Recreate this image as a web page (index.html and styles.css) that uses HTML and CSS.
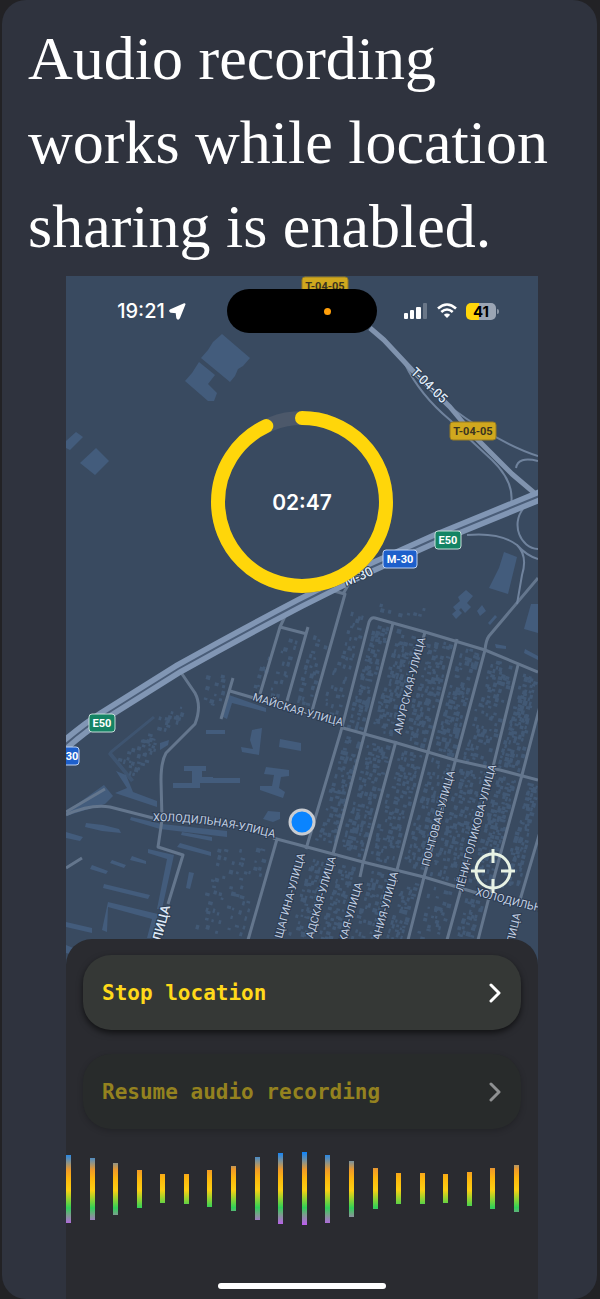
FILE: index.html
```
<!DOCTYPE html>
<html lang="en">
<head>
    <meta charset="UTF-8">
    <meta name="viewport" content="width=device-width, initial-scale=1.0">
    <title>Location sharing</title>
    <link rel="stylesheet" href="styles.css">
</head>
<body>
    <main class="card">
        <h1 class="headline">Audio recording<br>works while location<br>sharing is enabled.</h1>

        <div class="phone">
            <section class="map-area">
                <svg class="map" viewBox="66 276 472 690" role="img" aria-label="Map">
                    <defs>
                        <path id="p-t0405" d="M410 373L452 413"/>
                        <path id="p-m30" d="M346 586Q362 581 378 572"/>
                        <path id="p-may" d="M252 700Q300 716 350 728"/>
                        <path id="p-amur" d="M401 735L428 628"/>
                        <path id="p-holod" d="M153 821Q215 821 282 840"/>
                        <path id="p-holod2" d="M475 895Q510 905 550 914"/>
                        <path id="p-poch" d="M429 867L458 760"/>
                        <path id="p-leni" d="M463 892L499 755"/>
                        <path id="p-shag" d="M282 939L307 848"/>
                        <path id="p-adsk" d="M313 939L338 850"/>
                        <path id="p-kaya" d="M346 943L367 868"/>
                        <path id="p-aniya" d="M380 941L401 862"/>
                        <path id="p-litsa" d="M161 942L173 896"/>
                        <path id="p-litsa2" d="M514 944L523 904"/>
                    </defs>

                    <rect x="66" y="276" width="472" height="690" fill="#394a60"/>

                    <!-- large buildings -->
                    <g fill="#435c7c">
                        <path d="M222 334L250 358L243 366L238 369L235 376L230 382L201 358L208 350L213 342Z"/>
                        <path d="M199 362L215 375L208 384L217 393L214 401L208 401L185 381L192 373Z"/>
                        <path d="M66 441L76 432L83 437L70 450L66 448Z"/>
                        <path d="M96 448L109 461L95 475L80 463Z"/>
                        <path d="M504 552L517 557L508 594L489 588L499 568Z"/>
                        <path d="M466 590L473 596L467 603L471 607L465 613L461 608L457 612L453 607L460 601L458 597Z"/>
                        <path d="M458 609L462 613L456 619L452 614Z"/>
                        <path d="M538 604L531 604L524 629L538 633Z"/>
                        <path d="M477 611L482 605L486 611L480 616Z"/>
                        <path d="M488 623L495 615L497 617L490 625Z"/>
                        <path d="M206 730H225V734H206Z"/>
                        <path d="M280 739L301 743V751L279 747Z"/>
                        <path d="M252 730L262 728L259 755L242 752L241 747L253 749L250 740Z"/>
                        <path d="M229 695L266 708V712L232 703L227 719L221 716Z"/>
                        <path d="M184 766H206V771H202V777H213V783H200V788H173V783H192V771H184Z"/>
                        <path d="M213 778H240V783H213Z"/>
                        <path d="M266 767L289 770V776L281 777L279 788L285 792L283 798L260 790V786L272 786L274 775L264 774Z"/>
                        <path d="M116 771L126 775L133 792L157 801V807L115 793L127 788Z"/>
                        <path d="M66 812L104 785L113 796L105 804L66 816Z"/>
                        <path d="M86 823L103 825L119 829L121 833L102 831L85 827Z"/>
                        <path d="M66 832L83 837L80 841L66 838Z"/>
                        <path d="M132 856L146 861V864L130 860ZM112 860L126 865L124 868L110 863ZM92 865L108 871L106 874L90 869Z"/>
                        <path d="M104 884L150 895L148 899L103 888Z"/>
                        <path d="M131 817L162 824L227 831V837L160 829L130 820Z"/>
                        <path d="M182 832L212 837V841L181 835ZM180 843L211 852V856L177 847Z"/>
                        <path d="M148 849L174 855L162 909H157L167 859L148 853Z"/>
                        <path d="M108 907L152 919L147 938H153L158 914L108 902L102 930L107 932Z"/>
                        <path d="M189 872L194 873L190 889L186 888Z"/>
                        <path d="M66 922L92 928V933L66 927ZM66 945L78 950V956L66 953Z"/>
                        <path d="M268 811L280 812V819L273 822L263 819Z"/>
                        <path d="M495 644L506 646V649L496 648ZM525 649L538 656V660L524 653Z"/>
                        <path d="M110 751L153 716L155 718L112 753L134 780L131 782L108 754Z" opacity=".6"/>
                        <path d="M160 743L169 740L168 745L160 750Z"/>
                    </g>

                    <path id="houses" fill="#465f7f" opacity=".7"/>

                    <!-- streets -->
                    <g class="street">
                        <path d="M330 590L345 594L312 711M350 582L343 594"/>
                        <path d="M287 612L280 627L260 694M280 627L307 634M308 627L287 701"/>
                        <path d="M233 678L221 719M230 691L254 698"/>
                        <path d="M180 671L195 693Q202 706 195 724L166 753Q161 762 161 780L162 820L158 847L183 855L168 904"/>
                        <path d="M66 815Q90 804 110 807L153 818M66 812L105 789M66 868L82 858"/>
                        <path d="M273 838L307 847L363 862L424 877L477 893"/>
                        <path d="M277 839L248 940"/>
                        <path d="M343 728L397 743L455 760L500 770L538 780"/>
                        <path d="M538 672L485 650L425 632L375 618Q371 617 369 622L341 731L306 849"/>
                        <path d="M393 623L364 736L333 854"/>
                        <path d="M425 632L422 643M396 741L363 863L360 877"/>
                        <path d="M457 639L428 752L397 870"/>
                        <path d="M538 578L489 636Q486 640 485 650L455 762L424 877L408 940"/>
                        <path d="M518 665L493 767M461 889L447 940"/>
                        <path d="M540 706L522 775L495 874L478 940"/>
                        <path d="M540 832L520 900"/>
                    </g>
                    <g class="ramp">
                        <path d="M405 364Q420 395 450 420Q470 440 492 460Q515 482 511 505"/>
                        <path d="M450 407Q500 444 538 456M516 468Q518 456 538 461"/>
                        <path d="M467 535Q500 532 517 545Q528 556 522 575L517 604M517 545Q527 556 538 559"/>
                        <path d="M523 509C511 524 520 548 538 549"/>
                    </g>
                    <path class="trunk" d="M370 328L384 340L412 370L450 407L475 437L512 474L538 496"/>
                    <path class="highway" d="M60 749Q84 728 103 716L178 669Q235 637 300 603L370 568L437 538L542 495"/>
                    <path class="highway-gap" d="M60 749Q84 728 103 716L178 669Q235 637 300 603L370 568L437 538L542 495"/>

                    <!-- street names -->
                    <g class="street-name">
                        <text><textPath href="#p-may">МАЙСКАЯ-УЛИЦА</textPath></text>
                        <text><textPath href="#p-amur">АМУРСКАЯ-УЛИЦА</textPath></text>
                        <text><textPath href="#p-holod">ХОЛОДИЛЬНАЯ-УЛИЦА</textPath></text>
                        <text><textPath href="#p-holod2">ХОЛОДИЛЬН</textPath></text>
                        <text><textPath href="#p-poch">ПОЧТОВАЯ-УЛИЦА</textPath></text>
                        <text><textPath href="#p-leni">ЛЁНИ-ГОЛИКОВА-УЛИЦА</textPath></text>
                        <text><textPath href="#p-shag">ЩАГИНА-УЛИЦА</textPath></text>
                        <text><textPath href="#p-adsk">АДСКАЯ-УЛИЦА</textPath></text>
                        <text><textPath href="#p-kaya">КАЯ-УЛИЦА</textPath></text>
                        <text><textPath href="#p-aniya">АНИЯ-УЛИЦА</textPath></text>
                        <text><textPath href="#p-litsa2">ЛИЦА</textPath></text>
                    </g>
                    <g class="street-name major">
                        <text><textPath href="#p-t0405">T-04-05</textPath></text>
                        <text><textPath href="#p-m30">M-30</textPath></text>
                        <text><textPath href="#p-litsa">ЛИЦА</textPath></text>
                    </g>

                    <!-- road shields -->
                    <g class="shield yellow">
                        <rect x="302" y="277" width="46" height="18" rx="3"/>
                        <text x="325" y="290">T-04-05</text>
                        <rect x="450" y="422" width="46" height="18" rx="3"/>
                        <text x="473" y="435">T-04-05</text>
                    </g>
                    <g class="shield green">
                        <rect x="435" y="531" width="26" height="18" rx="3"/>
                        <text x="448" y="544">E50</text>
                        <rect x="89" y="714" width="26" height="18" rx="3"/>
                        <text x="102" y="727">E50</text>
                    </g>
                    <g class="shield blue">
                        <rect x="383" y="550" width="34" height="18" rx="3"/>
                        <text x="400" y="563">M-30</text>
                        <rect x="45" y="747" width="34" height="18" rx="3"/>
                        <text x="72" y="760">30</text>
                    </g>

                    <circle cx="302" cy="822" r="12" fill="#0a84ff" stroke="#c9ccd1" stroke-width="3"/>
                </svg>

                <div class="overlay">
                    <div class="status-bar">
                        <div class="clock">
                            <span>19:21</span>
                            <svg width="17" height="17" viewBox="0 0 17 17" aria-hidden="true">
                                <path d="M15.500 1.200L10 14.800Q9 16.500 8.300 14.800L7.600 9.300L2 8.800Q.3 8 1.800 7.200Z" fill="#fff" stroke="#fff" stroke-width="2" stroke-linejoin="round"/>
                            </svg>
                        </div>
                        <div class="island"><span class="mic-dot"></span></div>
                        <div class="indicators">
                            <svg width="24" height="16" viewBox="0 0 24 16" fill="#fff" aria-hidden="true">
                                <rect x="0" y="10" width="4" height="6" rx="1"/>
                                <rect x="6" y="7" width="4" height="9" rx="1"/>
                                <rect x="12" y="4" width="5" height="12" rx="1"/>
                                <rect x="19" y="0" width="4" height="16" rx="1" opacity=".25"/>
                            </svg>
                            <svg width="20" height="16" viewBox="0 0 20 16" fill="none" stroke="#fff" stroke-width="2.600" aria-hidden="true">
                                <path d="M1 5.500Q10-2.500 19 5.500M4.300 9Q10 4 15.700 9"/>
                                <path d="M10 15L6.800 11.800Q10 9.200 13.200 11.800Z" fill="#fff" stroke="none"/>
                            </svg>
                            <span class="battery">41</span>
                        </div>
                    </div>

                    <div class="timer">
                        <svg class="timer-ring" viewBox="0 0 184 184" aria-hidden="true">
                            <circle cx="92" cy="92" r="84" stroke="#4c586a"/>
                            <circle class="timer-progress" cx="92" cy="92" r="84" pathLength="100" stroke="#ffd60a"/>
                        </svg>
                        <time class="timer-value">02:47</time>
                    </div>

                    <button class="locate" type="button" aria-label="Center map on my location">
                        <svg width="46" height="46" viewBox="0 0 46 46" fill="none" stroke="#e8f2e4" stroke-width="3" aria-hidden="true">
                            <circle cx="23" cy="23" r="17"/>
                            <path d="M23 1V15M23 31V45M1 23H15M31 23H45"/>
                        </svg>
                    </button>
                </div>
            </section>

            <section class="sheet">
                <div class="actions">
                    <button class="action" type="button">
                        <span>Stop location</span>
                        <svg width="14" height="20" viewBox="0 0 14 20" aria-hidden="true"><path d="M3 2L11 10L3 18"/></svg>
                    </button>
                    <button class="action" type="button" disabled>
                        <span>Resume audio recording</span>
                        <svg width="14" height="20" viewBox="0 0 14 20" aria-hidden="true"><path d="M3 2L11 10L3 18"/></svg>
                    </button>
                </div>
                <div class="wave" id="wave"></div>
                <div class="home-indicator"></div>
            </section>
        </div>
    </main>

    <script>
        // audio levels, one bar each
        const levels = [68, 62, 52, 38, 29, 30, 37, 45, 63, 71, 73, 68, 56, 41, 31, 31, 29, 34, 41, 47];
        const wave = document.getElementById('wave');
        levels.forEach(level => {
            const bar = document.createElement('span');
            bar.className = 'bar';
            bar.style.height = level + 'px';
            wave.appendChild(bar);
        });

        // small houses: [top-left, top-right, bottom-right, bottom-left, columns, rows]
        const blocks = [
            [[374, 624], [388, 626], [361, 728], [346, 726], 4, 24],
            [[397, 628], [418, 634], [390, 736], [369, 732], 5, 24],
            [[428, 638], [452, 642], [425, 746], [402, 740], 5, 24],
            [[461, 645], [480, 652], [452, 756], [432, 750], 5, 24],
            [[490, 656], [513, 667], [488, 764], [460, 758], 5, 24],
            [[522, 672], [536, 676], [520, 770], [497, 766], 5, 23],
            [[345, 735], [361, 740], [334, 846], [314, 842], 4, 24],
            [[368, 740], [391, 746], [360, 856], [339, 849], 5, 24],
            [[400, 748], [423, 754], [394, 864], [368, 857], 5, 24],
            [[432, 756], [450, 763], [421, 870], [402, 865], 4, 24],
            [[460, 766], [488, 772], [460, 884], [430, 874], 6, 25],
            [[498, 774], [517, 779], [490, 886], [468, 880], 5, 24],
            [[528, 782], [537, 784], [520, 886], [500, 884], 4, 22],
            [[312, 856], [328, 860], [306, 938], [286, 938], 4, 16],
            [[340, 862], [356, 866], [336, 938], [318, 938], 4, 16],
            [[370, 870], [390, 874], [372, 938], [350, 938], 4, 14],
            [[402, 878], [418, 882], [402, 938], [386, 938], 4, 12],
            [[430, 884], [454, 892], [440, 938], [416, 938], 4, 10],
            [[466, 896], [484, 900], [472, 938], [454, 938], 4, 9],
            [[352, 608], [366, 614], [336, 722], [318, 718], 3, 18],
            [[312, 634], [328, 636], [308, 708], [294, 702], 3, 12],
            [[284, 636], [298, 638], [281, 698], [268, 694], 2, 10],
            [[206, 672], [228, 672], [220, 712], [203, 712], 3, 7],
            [[258, 668], [270, 654], [260, 688], [250, 688], 2, 5],
            [[375, 602], [425, 604], [425, 622], [382, 612], 6, 2],
            [[216, 846], [268, 848], [244, 936], [192, 930], 7, 12],
            [[152, 720], [186, 702], [190, 712], [160, 734], 8, 3],
            [[118, 758], [150, 732], [160, 742], [134, 776], 8, 6]
        ];
        let seed = 7;
        function rnd() {
            seed = (seed * 16807) % 2147483647;
            return seed / 2147483647;
        }
        let d = '';
        blocks.forEach(([a, b, c, e, cols, rows]) => {
            for (let r = 0; r < rows; r++) {
                for (let i = 0; i < cols; i++) {
                    if (rnd() < 0.25) continue;
                    const u = (i + rnd() * 0.8) / cols;
                    const v = (r + rnd() * 0.8) / rows;
                    const x = (a[0] * (1 - u) + b[0] * u) * (1 - v) + (e[0] * (1 - u) + c[0] * u) * v;
                    const y = (a[1] * (1 - u) + b[1] * u) * (1 - v) + (e[1] * (1 - u) + c[1] * u) * v;
                    const w = 2 + rnd() * 2.5;
                    const h = 2 + rnd() * 2.5;
                    d += `M${x.toFixed(1)} ${y.toFixed(1)}l${w.toFixed(1)} ${(w * 0.27).toFixed(1)}l${(-h * 0.27).toFixed(1)} ${h.toFixed(1)}l${(-w).toFixed(1)} ${(-w * 0.27).toFixed(1)}z`;
                }
            }
        });
        document.getElementById('houses').setAttribute('d', d);
    </script>
</body>
</html>
```
FILE: styles.css
```
* {
    box-sizing: border-box;
}

body {
    margin: 0;
    padding: 0 3px 0 2px;
    background-color: #222225;
    font-family: Inter, 'Liberation Sans', sans-serif;
    color: white;
}

.card {
    min-height: 100vh;
    overflow: hidden;
    border-radius: 24px;
    background-color: #2f333e;
}

.headline {
    margin: 0;
    padding: 16px 24px 8px 26px;
    font-family: 'Liberation Serif', serif;
    font-size: 62px;
    font-weight: normal;
    line-height: 84px;
}

.phone {
    margin: 0 59px 0 64px;
}

/* the map and its controls share one grid cell */
.map-area {
    display: grid;
}

.map,
.overlay {
    grid-area: 1 / 1;
}

.map {
    display: block;
    width: 100%;
}

.street,
.ramp,
.trunk,
.highway,
.highway-gap {
    fill: none;
    stroke-linejoin: round;
}

.street {
    stroke: #64768d;
    stroke-width: 3px;
}

.ramp {
    stroke: #70839d;
    stroke-width: 2px;
}

.trunk {
    stroke: #8093ae;
    stroke-width: 5px;
}

.highway {
    stroke: #8196b4;
    stroke-width: 13px;
}

.highway-gap {
    stroke: #4a5d78;
    stroke-width: 2px;
}

.street-name {
    font-family: Roboto, sans-serif;
    font-size: 11px;
    fill: #c0cee2;
    stroke: #2c3b50;
    stroke-width: 2px;
    paint-order: stroke;
}

.street-name.major {
    font-size: 13px;
    font-weight: 500;
    fill: #dde7f5;
}

.shield text {
    font-family: 'Liberation Sans Narrow', Roboto, sans-serif;
    font-size: 11px;
    font-weight: bold;
    text-anchor: middle;
    fill: white;
}

.shield.yellow rect {
    fill: #d0a81e;
    stroke: #967b22;
}

.shield.yellow text {
    fill: #3a3420;
}

.shield.green rect {
    fill: #148464;
    stroke: #c5ddd8;
}

.shield.blue rect {
    fill: #1d5fcb;
    stroke: #bdd2f3;
}

.overlay {
    display: flex;
    flex-direction: column;
    align-items: center;
    padding: 13px 22px 72px;
}

.status-bar {
    display: grid;
    grid-template-columns: 1fr 150px 1fr;
    align-items: center;
    align-self: stretch;
}

.clock {
    display: flex;
    justify-content: center;
    align-items: center;
    gap: 4px;
    padding-right: 12px;
    font-size: 20px;
    font-weight: 500;
}

.island {
    display: flex;
    justify-content: flex-end;
    align-items: center;
    height: 44px;
    padding-right: 46px;
    border-radius: 22px;
    background-color: black;
}

.mic-dot {
    width: 7px;
    height: 7px;
    border-radius: 50%;
    background-color: #ff9f0a;
}

.indicators {
    display: flex;
    justify-content: flex-end;
    align-items: center;
    gap: 9px;
    padding-right: 20px;
}

.battery {
    position: relative;
    width: 30px;
    border-radius: 5px;
    background: linear-gradient(to right, #ffd60a 42%, #9ba5b4 42%);
    color: black;
    font-size: 15px;
    font-weight: bold;
    line-height: 17px;
    text-align: center;
}

/* battery tip */
.battery::after {
    content: '';
    position: absolute;
    top: 6px;
    right: -3px;
    width: 2px;
    height: 5px;
    border-radius: 0 2px 2px 0;
    background-color: #8a95a5;
}

.timer {
    display: grid;
    place-items: center;
    margin-top: 77px;
}

.timer-ring,
.timer-value {
    grid-area: 1 / 1;
}

.timer-ring {
    width: 184px;
    fill: none;
    stroke-width: 14px;
}

.timer-progress {
    stroke-dasharray: 93 100;
    stroke-linecap: round;
    transform: rotate(-90deg);
    transform-origin: center;
}

.timer-value {
    font-size: 21px;
    font-weight: 600;
}

.locate {
    display: flex;
    align-self: flex-end;
    margin-top: auto;
    padding: 0;
    border: none;
    background: none;
}

.sheet {
    position: relative;
    display: flex;
    flex-direction: column;
    margin-top: -27px;
    padding: 16px 0 10px;
    border-radius: 26px 26px 0 0;
    background-color: #2a2b30;
}

.actions {
    display: flex;
    flex-direction: column;
    gap: 24px;
    padding: 0 17px;
}

.action {
    display: flex;
    justify-content: space-between;
    align-items: center;
    height: 75px;
    padding: 0 19px;
    border: none;
    border-radius: 28px;
    background-color: #353836;
    box-shadow: 0 3px 6px rgba(0, 0, 0, 0.6);
    color: #ffd91a;
    font-family: 'DejaVu Sans Mono', 'Liberation Mono', monospace;
    font-size: 21px;
    font-weight: bold;
}

.action svg {
    fill: none;
    stroke: white;
    stroke-width: 3px;
    stroke-linecap: round;
    stroke-linejoin: round;
}

.action:disabled {
    background-color: #282b2b;
    box-shadow: 0 2px 6px rgba(0, 0, 0, 0.2);
    color: #94821f;
}

.action:disabled svg {
    stroke: #8f9192;
}

.wave {
    display: flex;
    justify-content: space-between;
    align-items: center;
    height: 73px;
    margin: 23px 19px 0 0;
}

.bar {
    width: 5px;
    background: linear-gradient(#0a84ff, #8c938a 14%, #f09a28 24%, #fdb70d 36%, #fbd012 52%, #a5d32b 62%, #30d158 76%, #7d9c90 86%, #bf5af2) center / 100% 73px;
}

.home-indicator {
    align-self: center;
    width: 168px;
    height: 6px;
    margin-top: 58px;
    border-radius: 3px;
    background-color: white;
}
```
